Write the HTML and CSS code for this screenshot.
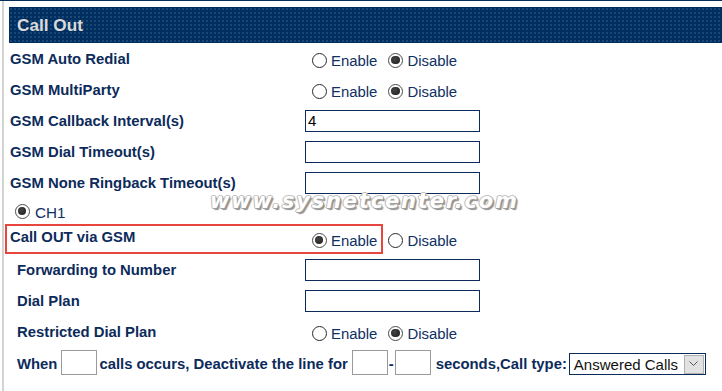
FILE: index.html
```html
<!DOCTYPE html>
<html>
<head>
<meta charset="utf-8">
<link rel="stylesheet" href="styles.css">
</head>
<body>
<div class="page">
  <div class="hdr">Call Out</div>

  <div class="row">
    <div class="lbl">GSM Auto Redial</div>
    <div class="radios">
      <label class="opt"><span class="rd"></span>Enable</label>
      <label class="opt"><span class="rd on"></span>Disable</label>
    </div>
  </div>

  <div class="row">
    <div class="lbl">GSM MultiParty</div>
    <div class="radios">
      <label class="opt"><span class="rd"></span>Enable</label>
      <label class="opt"><span class="rd on"></span>Disable</label>
    </div>
  </div>

  <div class="row">
    <div class="lbl">GSM Callback Interval(s)</div>
    <input class="field" type="text" value="4">
  </div>

  <div class="row">
    <div class="lbl">GSM Dial Timeout(s)</div>
    <input class="field" type="text" value="">
  </div>

  <div class="row">
    <div class="lbl">GSM None Ringback Timeout(s)</div>
    <input class="field" type="text" value="">
  </div>

  <div class="row row-ch">
    <label class="opt ch"><span class="rd on"></span>CH1</label>
  </div>

  <div class="row row-out">
    <div class="lbl lbl-up">Call OUT via GSM</div>
    <div class="radios">
      <label class="opt"><span class="rd on"></span>Enable</label>
      <label class="opt"><span class="rd"></span>Disable</label>
    </div>
    <div class="mark"></div>
  </div>

  <div class="row">
    <div class="lbl ind">Forwarding to Number</div>
    <input class="field" type="text" value="">
  </div>

  <div class="row">
    <div class="lbl ind">Dial Plan</div>
    <input class="field" type="text" value="">
  </div>

  <div class="row">
    <div class="lbl ind">Restricted Dial Plan</div>
    <div class="radios">
      <label class="opt"><span class="rd"></span>Enable</label>
      <label class="opt"><span class="rd on"></span>Disable</label>
    </div>
  </div>

  <div class="row row-when">
    <span class="btxt">When</span>
    <input class="box b1" type="text" value="">
    <span class="btxt t2">calls occurs, Deactivate the line for</span>
    <input class="box b2" type="text" value="">
    <span class="btxt dash">-</span>
    <input class="box b3" type="text" value="">
    <span class="btxt t3">seconds,Call type:</span>
    <div class="sel">
      <span class="seltxt">Answered Calls</span>
      <span class="selbtn"><svg width="9" height="6" viewBox="0 0 9 6"><polyline points="0.5,0.5 4.5,4.5 8.5,0.5" fill="none" stroke="#555" stroke-width="1"/></svg></span>
    </div>
  </div>

  <div class="wm">www.sysnetcenter.com</div>
</div>
</body>
</html>
```

FILE: styles.css
```css
html, body {
  margin: 0;
  padding: 0;
  background: #ffffff;
}
body {
  border-top: 1px solid #0b2d5a;
  height: 390px;
  overflow: hidden;
  font-family: "Liberation Sans", Arial, sans-serif;
}
.page {
  position: relative;
  margin-left: 2px;
  border-left: 2px solid #d3d3d3;
  padding-left: 5px;
  padding-top: 6px;
  height: 384px;
}
.hdr {
  height: 36px;
  box-sizing: border-box;
  padding-left: 8px;
  display: flex;
  align-items: center;
  background-color: #002f5f;
  background-image: radial-gradient(circle, rgba(120,160,200,0.22) 0.7px, transparent 1px);
  background-size: 4px 4px;
  color: #dadada;
  font-weight: bold;
  font-size: 17.2px;
}
.row {
  display: flex;
  align-items: center;
  height: 31px;
  position: relative;
}
.lbl {
  width: 296px;
  box-sizing: border-box;
  padding-left: 1px;
  font-weight: bold;
  font-size: 14.85px;
  color: #0c2b5b;
  white-space: nowrap;
}
.lbl.ind {
  padding-left: 8px;
}
.lbl-up {
  padding-bottom: 4px;
}
.radios {
  display: flex;
  align-items: center;
  padding-left: 7px;
  margin-top: 4px;
  gap: 11px;
}
.opt {
  display: flex;
  align-items: center;
  gap: 4px;
  font-size: 14.9px;
  color: #0f3063;
}
.rd {
  width: 15px;
  height: 15px;
  box-sizing: border-box;
  border: 1.3px solid #2a2a2a;
  border-radius: 50%;
  background: #fff;
  position: relative;
  margin-top: -1px;
}
.rd.on {
  border-color: #4a4a4a;
}
.rd.on::after {
  content: "";
  position: absolute;
  left: 2px;
  top: 2px;
  width: 8.4px;
  height: 8.4px;
  border-radius: 50%;
  background: radial-gradient(circle at 40% 40%, #454545, #1a1a1a);
}
.field {
  width: 175px;
  height: 22px;
  box-sizing: border-box;
  border: 1px solid #0c2b5b;
  padding: 0 2px;
  margin: 0;
  font-family: "Liberation Sans", Arial, sans-serif;
  font-size: 15px;
  color: #000;
  background: #fff;
  outline: none;
}
.row-ch {
  height: 26px;
}
.ch {
  padding-left: 6px;
  margin-top: 2px;
  gap: 5px;
  font-size: 15.2px;
  color: #0f3063;
}
.row-out {
  height: 30px;
}
.mark {
  position: absolute;
  left: -4px;
  top: 0;
  width: 378px;
  height: 30px;
  box-sizing: border-box;
  border: 2px solid #e8453c;
  pointer-events: none;
}
.row-when {
  height: 34px;
  padding-left: 8px;
}
.btxt {
  font-weight: bold;
  font-size: 14.85px;
  color: #0c2b5b;
  white-space: nowrap;
}
.box {
  width: 36px;
  height: 25px;
  box-sizing: border-box;
  border: 1px solid #9a9a9a;
  margin: 0 0 3px 0;
  padding: 0;
  background: #fff;
  outline: none;
}
.b1 {
  margin-left: 4px;
}
.t2 {
  margin-left: 2px;
}
.b2 {
  margin-left: 4px;
}
.dash {
  margin-left: 1px;
}
.b3 {
  margin-left: 1px;
}
.t3 {
  margin-left: 5px;
}
.sel {
  margin-left: 2px;
  width: 137px;
  height: 22px;
  box-sizing: border-box;
  border: 1px solid #0c2b5b;
  display: flex;
  align-items: center;
  background: #fff;
}
.seltxt {
  flex: 1;
  padding-left: 4px;
  font-size: 15px;
  color: #111;
  white-space: nowrap;
}
.selbtn {
  width: 20px;
  height: 19px;
  box-sizing: border-box;
  margin-right: 1px;
  border: 1px solid #b0b0b0;
  background: #e2e2e2;
  display: flex;
  align-items: center;
  justify-content: center;
}
.wm {
  position: absolute;
  left: 206px;
  top: 190px;
  font-family: "DejaVu Sans", sans-serif;
  font-weight: bold;
  font-style: italic;
  font-size: 21px;
  line-height: 1;
  letter-spacing: 1.8px;
  color: #ffffff;
  text-shadow: 1px 0 0 #a0a0a0, -1px 0 0 #b8b8b8, 0 1px 0 #a0a0a0, 0 -1px 0 #c4c4c4, 2px 2px 1px #909090;
  pointer-events: none;
  white-space: nowrap;
}
```
